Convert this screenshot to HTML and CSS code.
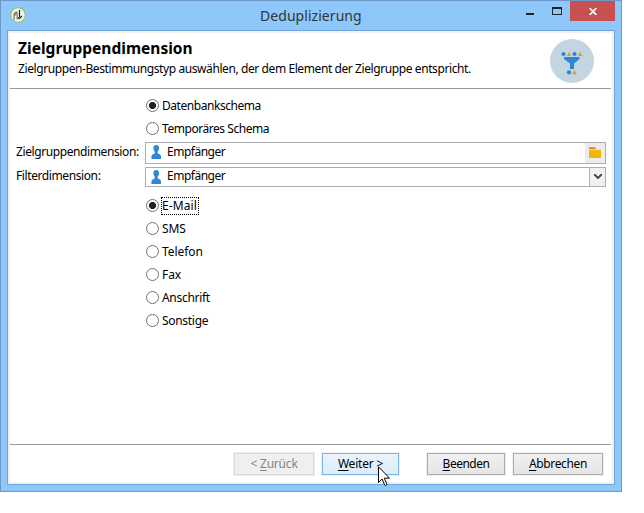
FILE: index.html
```html
<!DOCTYPE html>
<html lang="de">
<head>
<meta charset="utf-8">
<title>Deduplizierung</title>
<link rel="stylesheet" href="styles.css">
</head>
<body>
<div class="window">
  <header class="titlebar">
    <svg class="app-icon" width="16" height="16" viewBox="0 0 16 16"><circle cx="8" cy="8" r="7.3" fill="#f3f3f1" stroke="#98c450" stroke-width="1.1"/><path d="M3 7l3-2.500 2 1V12l-1.500 1V8L5 9v4H3.500z" fill="#999"/><path d="M4 6.500l3-1.500" stroke="#666" fill="none"/><path d="M9.500 3v7M12 9L9.500 11.500 7.500 10.500" stroke="#222" stroke-width="1.200" fill="none"/></svg>
    <h1 class="caption">Deduplizierung</h1>
    <svg class="min" width="8" height="2"><rect width="8" height="2" fill="#222"/></svg>
    <svg class="max" width="10" height="8"><path d="M0 0h10v8H0zM1 2v5h8V2z" fill="#222" fill-rule="evenodd"/></svg>
    <div class="close"><svg width="8" height="7" viewBox="0 0 8 7"><path d="M.6 0l6.800 7M7.400 0L.6 7" stroke="#fff" stroke-width="1.700"/></svg></div>
  </header>
  <main class="client">
    <section class="head">
      <div>
        <h2>Zielgruppendimension</h2>
        <p>Zielgruppen-Bestimmungstyp auswählen, der dem Element der Zielgruppe entspricht.</p>
      </div>
      <svg class="badge" width="44" height="44" viewBox="0 0 44 44"><circle cx="22" cy="22" r="22" fill="#c3d5e0"/><g fill="#2f86d6"><circle cx="13.500" cy="15" r="2.100"/><circle cx="24.500" cy="15" r="2.100"/><circle cx="19" cy="33.300" r="2.100"/><path d="M14 18h15.500v2l-5.500 4.500V30h-4v-5.500L14 20z"/></g><path d="M17 17l2-4.200 2 4.200zM28 17l2-4.200 2 4.200zM22.500 35.300l2-4.200 2 4.200z" fill="#e8960c"/></svg>
    </section>
    <section class="form">
      <div class="radio tight"><i class="dot on"></i><span>Datenbankschema</span></div>
      <div class="radio tight"><i class="dot"></i><span>Temporäres Schema</span></div>
      <div class="row first"><label>Zielgruppendimension:</label><div class="field"><svg class="person" width="11" height="14" viewBox="0 0 11 14"><path d="M5.200 0C3.400 0 2.400 1.200 2.400 3c0 2 .9 3 1.500 4L3.500 8.500 1.300 9.700C.4 10.500.3 12 .5 14h9.500c.2-2 0-3.500-.7-4.300L6.900 8.500 6.500 7c.7-1 1.500-2 1.500-4 0-1.800-1-3-2.800-3z" fill="#2f86d6"/></svg><span>Empfänger</span><div class="browse"><svg width="12" height="11"><path d="M0 0h6v1h1v1H0z" fill="#e98d1a"/><path d="M0 2h7v1H0z" fill="#f7cf9a"/><path d="M0 3h12v8H0z" fill="#edb900"/><path d="M0 2.500h12v1H0z" fill="#f3cf63"/></svg></div></div></div>
      <div class="row second"><label>Filterdimension:</label><div class="field"><svg class="person" width="11" height="14" viewBox="0 0 11 14"><path d="M5.200 0C3.400 0 2.400 1.200 2.400 3c0 2 .9 3 1.500 4L3.500 8.500 1.300 9.700C.4 10.500.3 12 .5 14h9.500c.2-2 0-3.500-.7-4.300L6.900 8.500 6.500 7c.7-1 1.500-2 1.500-4 0-1.800-1-3-2.800-3z" fill="#2f86d6"/></svg><span>Empfänger</span><div class="drop"><svg width="8" height="6"><path d="M0 0h2v1h1v1h2V1h1V0h2v2H7v1H6v1H5v1H3V4H2V3H1V2H0z" fill="#555"/></svg></div></div></div>
      <div class="kinds">
        <div class="radio"><i class="dot on"></i><span class="focus">E-Mail</span></div>
        <div class="radio"><i class="dot"></i><span>SMS</span></div>
        <div class="radio"><i class="dot"></i><span>Telefon</span></div>
        <div class="radio"><i class="dot"></i><span>Fax</span></div>
        <div class="radio snug"><i class="dot"></i><span>Anschrift</span></div>
        <div class="radio snug"><i class="dot"></i><span>Sonstige</span></div>
      </div>
    </section>
    <footer class="foot">
      <button class="btn back" disabled>&lt; <u>Z</u>urück</button>
      <button class="btn next"><u>W</u>eiter &gt;</button>
      <button class="btn quit"><u>B</u>eenden</button>
      <button class="btn cancel"><u>A</u>bbrechen</button>
    </footer>
  </main>
  <svg class="cursor" width="13" height="21" viewBox="0 0 13 21"><path d="M.5.8v15.700l3.600-3.500 2.600 6c.4 1 2.600.2 2.100-1L6.300 12.200h5.200z" fill="#fff" stroke="#000"/></svg>
</div>
</body>
</html>
```
FILE: styles.css
```css
* { box-sizing: border-box; }
body { margin: 0; background: #fff; font: 12px/16px "Noto Sans", sans-serif; color: #000; }
svg { display: block; flex: none; }
h1, h2, p { margin: 0; white-space: nowrap; }
.window { position: relative; width: 622px; height: 492px; border: 1px solid #6d99c4; background: #8ec8fa; padding: 0 6px 6px; }
.titlebar { height: 29px; display: flex; align-items: flex-start; }
.app-icon { margin: 6px 0 0 3px; }
.caption { flex: 1; margin: 5px 0 0 234px; font-size: 14px; line-height: 20px; font-weight: 400; color: #333; letter-spacing: .05px; }
.min { margin-top: 12px; }
.max { margin: 6px 8px 0 18px; }
.close { width: 45px; height: 20px; background: #c75050; display: flex; align-items: center; justify-content: center; }
.client { height: 455px; border: 1px solid #73a6d6; display: flex; flex-direction: column; background: #fff; box-shadow: inset 0 0 0 2px #f0f0f0; padding: 2px 3px 2px 2px; }
.head { height: 56px; border-bottom: 1px solid #999; display: flex; justify-content: space-between; padding: 6px 17px 0 8px; }
.head h2 { font-size: 15.5px; line-height: 20px; margin-top: -1px; letter-spacing: .02px; }
.head p { margin-top: 3px; letter-spacing: -.41px; }
.form { flex: 1; padding: 5px 5px 0 6px; }
.radio { height: 23px; display: flex; align-items: center; gap: 3px; padding-left: 130px; white-space: nowrap; letter-spacing: -.05px; }
.tight { letter-spacing: -.45px; }
.snug { letter-spacing: -.3px; }
.dot { width: 13px; height: 13px; border: 1px solid #707070; border-radius: 50%; background: #fff; }
.dot.on { background: radial-gradient(circle, #222 3.2px, #fff 3.9px); }
.row { display: flex; letter-spacing: -.4px; }
.row label { width: 129px; line-height: 20px; white-space: nowrap; }
.second label { line-height: 18px; }
.field { flex: 1; display: flex; border: 1px solid #abadb3; }
.first { height: 22px; margin-top: 2px; }
.second { height: 20px; margin-top: 3px; }
.person { margin: 2px 5px 0 5px; }
.field span { flex: 1; line-height: 18px; letter-spacing: -.5px; }
.second .field span { line-height: 16px; }
.browse { width: 20px; background: #ececec; padding: 4px 0 0 4px; }
.drop { width: 16px; border-left: 1px solid #abadb3; background: #f0f0f0; padding: 6px 0 0 4px; }
.kinds { margin-top: 7px; }
.focus { outline: 1px dotted #000; padding-right: 1px; letter-spacing: .1px; }
.foot { height: 38px; border-top: 1px solid #999; display: flex; padding: 8px 8px 0 224px; }
.btn { height: 22px; padding: 0; border: 1px solid #acacac; background: linear-gradient(#f0f0f0, #e5e5e5); box-shadow: 0 0 0 1px #f0f0f0; font: inherit; color: #000; line-height: 18px; white-space: nowrap; letter-spacing: -.2px; }
.btn u { text-underline-offset: 2px; }
.back { width: 80px; color: #838383; background: #efefef; border-color: #d9d9d9; }
.next { width: 77px; margin-left: 8px; border-color: #7eb4ea; background: linear-gradient(#ecf4fc, #dcecfc); }
.quit { width: 78px; margin-left: 28px; letter-spacing: -.5px; }
.cancel { width: 90px; margin-left: 8px; letter-spacing: -.35px; }
.cursor { position: absolute; left: 377px; top: 465px; }
```
